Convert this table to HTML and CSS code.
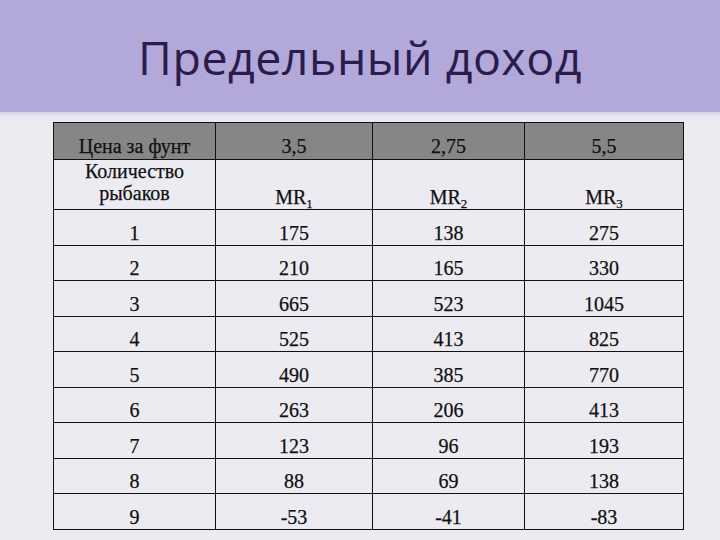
FILE: index.html
```html
<!DOCTYPE html>
<html lang="ru">
<head>
<meta charset="utf-8">
<link rel="stylesheet" href="styles.css">
</head>
<body>
<header class="band">
  <h1 class="title">Предельный доход</h1>
</header>
<div class="edge"></div>
<main class="content">
  <table class="grid">
    <colgroup>
      <col class="c1"><col class="c2"><col class="c3"><col class="c4">
    </colgroup>
    <tr class="head">
      <td>Цена за фунт</td><td>3,5</td><td>2,75</td><td>5,5</td>
    </tr>
    <tr class="sub-head">
      <td class="label">Количество<br>рыбаков</td>
      <td>MR<sub>1</sub></td><td>MR<sub>2</sub></td><td>MR<sub>3</sub></td>
    </tr>
    <tr class="row"><td>1</td><td>175</td><td>138</td><td>275</td></tr>
    <tr class="row"><td>2</td><td>210</td><td>165</td><td>330</td></tr>
    <tr class="row"><td>3</td><td>665</td><td>523</td><td>1045</td></tr>
    <tr class="row"><td>4</td><td>525</td><td>413</td><td>825</td></tr>
    <tr class="row"><td>5</td><td>490</td><td>385</td><td>770</td></tr>
    <tr class="row"><td>6</td><td>263</td><td>206</td><td>413</td></tr>
    <tr class="row"><td>7</td><td>123</td><td>96</td><td>193</td></tr>
    <tr class="row"><td>8</td><td>88</td><td>69</td><td>138</td></tr>
    <tr class="row"><td>9</td><td>-53</td><td>-41</td><td>-83</td></tr>
  </table>
</main>
</body>
</html>
```

FILE: styles.css
```css
html, body {
  margin: 0;
  padding: 0;
}
body {
  width: 720px;
  height: 540px;
  overflow: hidden;
  background: #ecebf1;
  font-family: "Liberation Serif", "Times New Roman", serif;
  color: #111;
}
.band {
  height: 85px;
  padding-top: 27px;
  background: #b3a8da;
  text-align: center;
}
.title {
  margin: 0;
  font-family: "Open Sans", "DejaVu Sans", sans-serif;
  font-weight: 400;
  font-size: 46.5px;
  line-height: 61px;
  letter-spacing: 0.5px;
  color: #2a1d4c;
}
.edge {
  height: 6px;
  background: linear-gradient(#d9d4ea, #ecebf1);
}
.content {
  padding: 4px 0 0 53px;
}
.grid {
  border-collapse: collapse;
  width: 630px;
  table-layout: fixed;
  font-family: "Liberation Serif", "Times New Roman", serif;
  font-size: 20px;
  -webkit-text-stroke: 0.25px #111;
}
.c1 { width: 162px; }
.c2 { width: 157px; }
.c3 { width: 152px; }
.c4 { width: 159px; }
.grid td {
  border: 1px solid #111;
  padding: 0;
  text-align: center;
  vertical-align: bottom;
  line-height: 23px;
}
.head td {
  height: 35px;
  background: #868686;
  padding-bottom: 1px;
}
.sub-head td {
  height: 48px;
  padding-bottom: 0;
}
.sub-head td.label {
  line-height: 22px;
  padding-bottom: 5px;
  height: 43px;
}
.row td {
  height: 34.5px;
}
sub {
  font-size: 13px;
  line-height: 0;
  vertical-align: -4px;
}
```
